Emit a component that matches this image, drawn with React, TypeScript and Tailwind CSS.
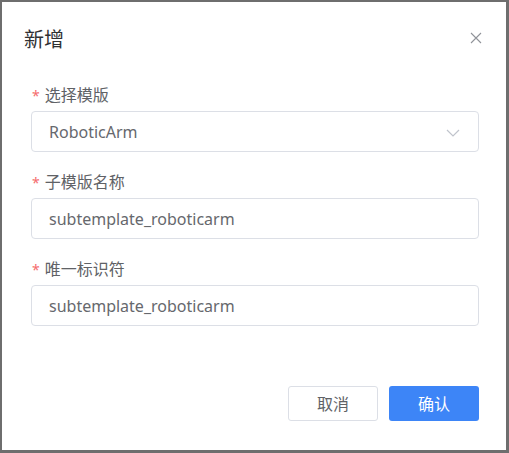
const FONT = { fontFamily: '"Noto Sans", "Noto Sans CJK SC", sans-serif' };

function Label({ text }: { text: string }) {
  return (
    <div className="flex items-center h-[22px] mb-[5px] text-[16px] text-[#606266]">
      <span className="text-[#f56c6c] text-[14px] mr-[5px] ml-[1px]">*</span>
      <span>{text}</span>
    </div>
  );
}

function TextInput({ value, select }: { value: string; select?: boolean }) {
  return (
    <div className="flex items-center justify-between h-[41px] border border-[#dcdfe6] rounded-[4px] px-[17px] text-[16px] text-[#66686d] bg-white">
      <span>{value}</span>
      {select && (
        <svg width="14" height="8" viewBox="0 0 14 8" fill="none" className="mr-[1px] mt-[3px]">
          <path d="M1 1l6 6 6-6" stroke="#c0c4cc" strokeWidth="1.2" />
        </svg>
      )}
    </div>
  );
}

export default function App() {
  return (
    <div className="w-[509px] h-[453px] bg-[#6e6e6e] pt-[2px] pl-[2px]" style={FONT}>
      <div className="w-[504px] h-[448px] bg-white flex flex-col">
        {/* Header */}
        <div className="flex items-center justify-between pt-[24px] pl-[22px] pr-[24px] h-[52px]">
          <span className="text-[20px] leading-[28px] text-[#303133]">新增</span>
          <svg width="12" height="12" viewBox="0 0 12 12" className="mt-[-4px]">
            <path d="M1 1l10 10M11 1L1 11" stroke="#909399" strokeWidth="1.1" />
          </svg>
        </div>

        {/* Form */}
        <div className="pl-[29px] pr-[27px] pt-[30px]">
          <div className="mb-[19px]">
            <Label text="选择模版" />
            <TextInput value="RoboticArm" select />
          </div>
          <div className="mb-[19px]">
            <Label text="子模版名称" />
            <TextInput value="subtemplate_roboticarm" />
          </div>
          <div>
            <Label text="唯一标识符" />
            <TextInput value="subtemplate_roboticarm" />
          </div>
        </div>

        {/* Footer */}
        <div className="flex justify-end gap-[11px] px-[27px] mt-[60px]">
          <button className="w-[90px] h-[35px] border border-[#dcdfe6] rounded-[3px] text-[16px] text-[#606266] bg-white">
            取消
          </button>
          <button className="w-[90px] h-[35px] rounded-[3px] text-[16px] text-white bg-[#3d85f7]">
            确认
          </button>
        </div>
      </div>
    </div>
  );
}
